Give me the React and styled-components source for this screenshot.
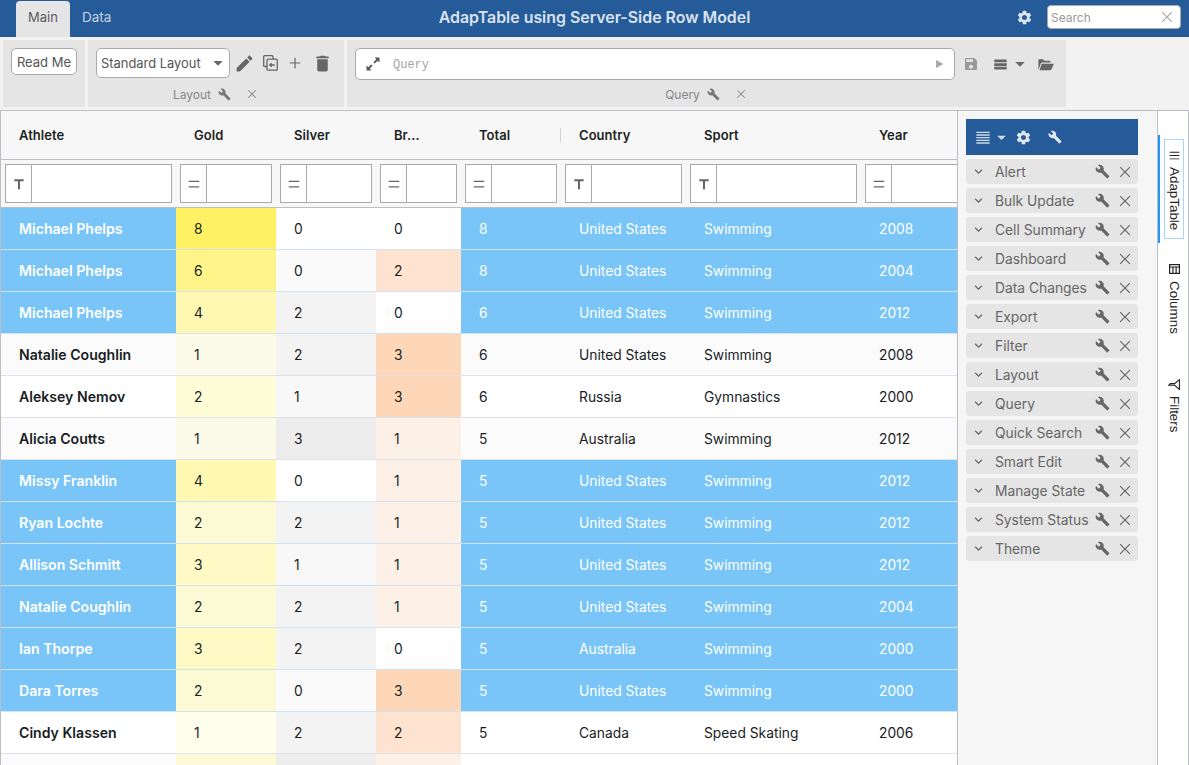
import React from 'react';
import styled, { createGlobalStyle } from 'styled-components';

const P = {
  edit: 'M3 17.25V21h3.75L17.81 9.94l-3.75-3.75L3 17.25zM20.71 7.04c.39-.39.39-1.02 0-1.41l-2.34-2.34c-.39-.39-1.02-.39-1.41 0l-1.83 1.83 3.75 3.75 1.83-1.83z',
  wrench: 'M22.7 19l-9.1-9.1c.9-2.3.4-5-1.5-6.9-2-2-5-2.4-7.4-1.3L9 6 6 9 1.6 4.7C.4 7.1.9 10.1 2.9 12.1c1.9 1.9 4.6 2.4 6.9 1.5l9.1 9.1c.4.4 1 .4 1.4 0l2.3-2.3c.5-.4.5-1.1.1-1.4z',
  gear: 'M19.14 12.94c.04-.3.06-.61.06-.94 0-.32-.02-.64-.07-.94l2.03-1.58a.49.49 0 0 0 .12-.61l-1.92-3.32a.488.488 0 0 0-.59-.22l-2.39.96c-.5-.38-1.03-.7-1.62-.94l-.36-2.54a.484.484 0 0 0-.48-.41h-3.84c-.24 0-.43.17-.47.41l-.36 2.54c-.59.24-1.13.57-1.62.94l-2.39-.96c-.22-.08-.47 0-.59.22L2.74 8.87c-.12.21-.08.47.12.61l2.03 1.58c-.05.3-.09.63-.09.94s.02.64.07.94l-2.03 1.58a.49.49 0 0 0-.12.61l1.92 3.32c.12.22.37.29.59.22l2.39-.96c.5.38 1.03.7 1.62.94l.36 2.54c.05.24.24.41.48.41h3.84c.24 0 .44-.17.47-.41l.36-2.54c.59-.24 1.13-.56 1.62-.94l2.39.96c.22.08.47 0 .59-.22l1.92-3.32c.12-.22.07-.47-.12-.61l-2.01-1.58zM12 15.6c-1.98 0-3.6-1.62-3.6-3.6s1.62-3.6 3.6-3.6 3.6 1.62 3.6 3.6-1.62 3.6-3.6 3.6z',
  trash: 'M6 19c0 1.1.9 2 2 2h8c1.1 0 2-.9 2-2V7H6v12zM19 4h-3.5l-1-1h-5l-1 1H5v2h14V4z',
  save: 'M17 3H5c-1.11 0-2 .9-2 2v14c0 1.1.89 2 2 2h14c1.1 0 2-.9 2-2V7l-4-4zm-5 16c-1.66 0-3-1.34-3-3s1.34-3 3-3 3 1.34 3 3-1.34 3-3 3zm3-10H5V5h10v4z',
  folder: 'M2 19V6c0-.8.6-1.4 1.4-1.4h5l2 2h7.2c.8 0 1.4.6 1.4 1.4v1H7.2c-.8 0-1.5.4-1.8 1.1L2.4 19zm1.6 1h15.2c.5 0 1-.3 1.2-.7L23.6 12c.3-.6-.1-1.2-.8-1.2H7.6c-.5 0-1 .3-1.2.7z',
  list: 'M2 5c0-.6.4-1 1-1h18c.6 0 1 .4 1 1v3.5H2zM2 9.8h20v4.4H2zM2 15.5h20V19c0 .6-.4 1-1 1H3c-.6 0-1-.4-1-1z',
  plus: 'M19 12.8h-6.2V19h-1.6v-6.2H5v-1.6h6.2V5h1.6v6.2H19z',
  close: 'M19 6.1 17.9 5 12 10.9 6.1 5 5 6.1 10.9 12 5 17.9 6.1 19 12 13.1 17.9 19 19 17.9 13.1 12z',
  chevron: 'M7.41 8.59 12 13.17l4.59-4.58L18 10l-6 6-6-6z',
  play: 'M6 4l15 8-15 8z',
  caret: 'M5 9h14l-7 7z',
  T: 'M4 4h16v3.4h-6.2V21h-3.6V7.4H4z',
  eq: 'M3 6.5h18v2H3zM3 16h18v2H3z',
  lines: 'M2 4h20v2H2zM2 8h20v2H2zM2 12h20v2H2zM2 16h20v2H2zM2 20h20v2H2z',
  menu: 'M3 5h18v1.7H3zM3 11.2h18v1.7H3zM3 17.4h18v1.7H3z',
};

const Global = createGlobalStyle`
  html, body { margin: 0; padding: 0; height: 100%; overflow: hidden; background: #fff; }
  body { font-family: Inter, "Noto Sans", sans-serif; color: #181d1f; }
  * { box-sizing: border-box; }
`;

const Svg = styled.svg`
  display: block;
  flex: none;
  width: ${p => p.$s}px;
  height: ${p => p.$s}px;
  fill: ${p => p.$c};
`;
const Icon = ({ d, s = 16, c = '#666' }) => (
  <Svg viewBox="0 0 24 24" $s={s} $c={c}><path d={d} /></Svg>
);
const Drawn = styled.svg`
  display: block;
  flex: none;
`;
const CopyIcon = () => (
  <Drawn width="15" height="16" viewBox="0 0 15 16" fill="none" stroke="#666" strokeWidth="1.3">
    <path d="M4 11.5H1.7a1 1 0 0 1-1-1V1.7a1 1 0 0 1 1-1H9a1 1 0 0 1 1 1V4" />
    <rect x="4" y="4.2" width="10.3" height="11" rx="1" />
    <path d="M11.8 10H6.8M8.6 8.2 6.8 10l1.8 1.8" />
  </Drawn>
);
const ExpandIcon = () => (
  <Drawn width="14" height="14" viewBox="0 0 14 14" fill="#555" stroke="none">
    <path d="M8.5 .5H13.5V5.5L11.7 3.7 8.8 6.6 7.4 5.2 10.3 2.3zM5.5 13.5H.5V8.5L2.3 10.3 5.2 7.4 6.6 8.8 3.7 11.7z" />
  </Drawn>
);
const FilterIcon = () => (
  <Drawn width="12" height="11" viewBox="0 0 12 11" fill="none" stroke="#222" strokeWidth="1.1">
    <path d="M11.4 .6V10.4L6.6 6.3H.8L2.4 4.6H6.6z" />
  </Drawn>
);
const ColumnsIcon = () => (
  <Drawn width="11" height="10" viewBox="0 0 11 10" fill="none" stroke="#222" strokeWidth="1.2">
    <rect x=".6" y=".6" width="9.8" height="8.8" /><path d="M.6 3h9.8M3.9 3V9.4M7.1 3V9.4" />
  </Drawn>
);

const Page = styled.div`
  width: 1189px;
  height: 765px;
  display: flex;
  flex-direction: column;
  overflow: hidden;
`;
const TopBar = styled.header`
  height: 37px;
  flex: none;
  background: #265b9a;
  display: grid;
  grid-template-columns: 1fr auto 1fr;
  align-items: stretch;
`;
const Tabs = styled.div`
  display: flex;
  padding: 1px 0 0 16px;
`;
const Tab = styled.div`
  width: 54px;
  padding-left: 12px;
  font-size: ${p => (p.$active ? 13 : 13.5)}px;
  line-height: 33px;
  border-radius: 4px 4px 0 0;
  color: ${p => (p.$active ? '#5c5c5c' : '#c5d2e3')};
  background: ${p => (p.$active ? '#e5e5e5' : 'transparent')};
`;
const Title = styled.div`
  font-size: 15.9px;
  font-weight: 600;
  line-height: 35px;
  color: #dbe3ee;
`;
const TopRight = styled.div`
  display: flex;
  align-items: center;
  justify-content: flex-end;
  gap: 14px;
  padding: 0 8px 3px 0;
`;
const Search = styled.div`
  width: 134px;
  height: 24px;
  background: #fff;
  border: 1px solid #aaa;
  border-radius: 4px;
  padding: 0 4px 0 3px;
  display: flex;
  align-items: center;
  justify-content: space-between;
  font-size: 12px;
  color: #9a9a9a;
`;
const Toolbar = styled.section`
  height: 73px;
  flex: none;
  background: #f2f2f2;
  display: flex;
  gap: 3px;
  padding: 3px 3px;
`;
const Panel = styled.div`
  width: ${p => p.$w}px;
  height: 67px;
  background: #e5e5e5;
  display: flex;
  flex-direction: column;
`;
const PanelBody = styled.div`
  height: 45px;
  padding: 8px 8px 0;
  display: flex;
  align-items: flex-start;
`;
const PanelFoot = styled.div`
  display: flex;
  align-items: center;
  justify-content: center;
  gap: 7px;
  height: 18px;
  font-size: 12px;
  color: #888;
`;
const FootClose = styled.span`
  margin-left: 7px;
  display: block;
`;
const ReadMe = styled.div`
  width: 66px;
  height: 27px;
  background: #fff;
  border: 1px solid #aaa;
  border-radius: 5px;
  font-size: 13px;
  line-height: 26px;
  text-align: center;
  color: #555;
`;
const Select = styled.div`
  width: 134px;
  height: 30px;
  flex: none;
  background: #fff;
  border: 1px solid #aaa;
  border-radius: 5px;
  display: flex;
  align-items: center;
  justify-content: space-between;
  padding: 0 3px 0 4px;
  font-size: 12.9px;
  color: #555;
`;
const QueryBox = styled.div`
  width: 600px;
  height: 32px;
  flex: none;
  background: #fff;
  border: 1px solid #aaa;
  border-radius: 5px;
  display: flex;
  align-items: center;
  padding: 0 9px 0 10px;
  font-family: "Liberation Mono", monospace;
  font-size: 12px;
  color: #a4a4a4;
`;
const QueryText = styled.span`
  flex: 1;
  margin-left: 13px;
  padding-top: 1px;
`;
const IconRow = styled.div`
  display: flex;
  align-items: center;
  gap: ${p => p.$gap}px;
  height: ${p => p.$h}px;
  margin-left: ${p => p.$ml}px;
`;
const Main = styled.main`
  flex: 1;
  min-height: 0;
  display: flex;
  border-top: 1px solid #babfc7;
`;
const Grid = styled.div`
  width: 958px;
  flex: none;
  overflow: hidden;
  border-left: 1px solid #babfc7;
  border-right: 1px solid #babfc7;
`;
const HeaderRow = styled.div`
  display: flex;
  width: max-content;
  height: 48px;
  background: #f7f7f8;
`;
const HeaderCell = styled.div`
  width: ${p => p.$w}px;
  flex: none;
  padding-left: 18px;
  font-size: 13px;
  letter-spacing: 0.05px;
  font-weight: 600;
  line-height: 49px;
  color: #1c1f21;
  position: relative;
  ${p => p.$sep && `
    &::after { content: ''; position: absolute; right: 0; top: 17px; height: 14px; width: 1px; background: #d0d3d8; }
  `}
`;
const FilterRow = styled.div`
  display: flex;
  width: max-content;
  height: 49px;
  background: #f7f7f8;
  border-top: 1px solid #babfc7;
  border-bottom: 1px solid #babfc7;
`;
const FilterCell = styled.div`
  width: ${p => p.$w}px;
  flex: none;
  padding: 4px 4px;
`;
const FilterBox = styled.div`
  height: 39px;
  background: #fff;
  border: 1px solid #aaa;
  display: flex;
`;
const FilterKind = styled.div`
  width: 26px;
  flex: none;
  border-right: 1px solid #aaa;
  display: flex;
  align-items: center;
  justify-content: center;
`;
const Row = styled.div`
  display: flex;
  width: max-content;
  height: 42px;
  overflow: hidden;
  background: ${p => (p.$blue ? '#7ac5f8' : p.$odd ? '#fbfbfb' : '#fff')};
  color: ${p => (p.$blue ? '#fff' : '#181d1f')};
  border-bottom: 1px solid ${p => (p.$blue ? '#d4e3f1' : '#dde2eb')};
`;
const Cell = styled.div`
  width: ${p => p.$w}px;
  flex: none;
  padding-left: 18px;
  font-size: ${p => (p.$bold ? 14.1 : 13.8)}px;
  line-height: 42px;
  font-weight: ${p => (p.$bold ? 600 : 400)};
  background: ${p => p.$bg || 'transparent'};
  color: ${p => p.$color || 'inherit'};
`;
const Side = styled.aside`
  width: 200px;
  flex: none;
  background: #f6f6f6;
  padding: 8px 0 0 8px;
  border-right: 1px solid #babfc7;
`;
const SideHead = styled.div`
  width: 172px;
  height: 36px;
  background: #265b9a;
  display: flex;
  align-items: center;
  padding: 0 0 0 9px;
`;
const SideList = styled.div`
  width: 172px;
  margin-top: 4px;
  display: flex;
  flex-direction: column;
  gap: 4px;
`;
const SideItem = styled.div`
  height: 25px;
  background: #e5e5e5;
  border-radius: 3px;
  display: flex;
  align-items: center;
  padding: 0 4px 0 5px;
  font-size: 13.8px;
  color: #666;
`;
const SideName = styled.span`
  flex: 1;
  margin-left: 9px;
  white-space: nowrap;
`;
const Rail = styled.nav`
  flex: 1;
  background: #fff;
  border-right: 1px solid #babfc7;
  padding-top: 24px;
  font-family: "Liberation Sans", Arial, sans-serif;
`;
const RailTab = styled.div`
  width: 30px;
  height: ${p => p.$h}px;
  padding: 4px;
  border-left: 2px solid ${p => (p.$active ? '#2196f3' : 'transparent')};
`;
const RailInner = styled.div`
  height: ${p => (p.$active ? '100%' : 'auto')};
  border: 1px solid ${p => (p.$active ? '#a9d3f8' : 'transparent')};
  display: flex;
  flex-direction: column;
  align-items: center;
  padding-top: ${p => p.$top}px;
  gap: ${p => p.$gap}px;
  font-size: 13.4px;
  color: #222;
`;
const RailText = styled.span`
  writing-mode: vertical-lr;
  white-space: nowrap;
`;

const cols = [175, 100, 100, 85, 100, 125, 175, 200];
const heads = ['Athlete', 'Gold', 'Silver', 'Br...', 'Total', 'Country', 'Sport', 'Year'];
const kinds = [P.T, P.eq, P.eq, P.eq, P.eq, P.T, P.T, P.eq];

const rows = [
  ['Michael Phelps', 8, 0, 0, 8, 'United States', 'Swimming', 2008],
  ['Michael Phelps', 6, 0, 2, 8, 'United States', 'Swimming', 2004],
  ['Michael Phelps', 4, 2, 0, 6, 'United States', 'Swimming', 2012],
  ['Natalie Coughlin', 1, 2, 3, 6, 'United States', 'Swimming', 2008],
  ['Aleksey Nemov', 2, 1, 3, 6, 'Russia', 'Gymnastics', 2000],
  ['Alicia Coutts', 1, 3, 1, 5, 'Australia', 'Swimming', 2012],
  ['Missy Franklin', 4, 0, 1, 5, 'United States', 'Swimming', 2012],
  ['Ryan Lochte', 2, 2, 1, 5, 'United States', 'Swimming', 2012],
  ['Allison Schmitt', 3, 1, 1, 5, 'United States', 'Swimming', 2012],
  ['Natalie Coughlin', 2, 2, 1, 5, 'United States', 'Swimming', 2004],
  ['Ian Thorpe', 3, 2, 0, 5, 'Australia', 'Swimming', 2000],
  ['Dara Torres', 2, 0, 3, 5, 'United States', 'Swimming', 2000],
  ['Cindy Klassen', 1, 2, 2, 5, 'Canada', 'Speed Skating', 2006],
];
// The next row only shows its top edge at the bottom of the window: backgrounds, no legible text.
const partialRow = [2, 3, 1];

const goldBg = (v, odd) => {
  const base = odd ? 251 : 255;
  const a = v / 8;
  const mix = (to, from) => Math.round(from + (to - from) * a);
  return `rgb(${mix(255, base)},${mix(241, base)},${mix(100, base)})`;
};
const silverBg = (v, odd) => ['', '#f8f8f8', '#f3f3f3', '#ededed'][v] || (odd ? '#fafafa' : '#fff');
const bronzeBg = (v, odd) => ['', '#fdf0e6', '#fde3d0', '#fdd7b8'][v] || (odd ? '#fafafa' : '#fff');

const sideItems = ['Alert', 'Bulk Update', 'Cell Summary', 'Dashboard', 'Data Changes', 'Export', 'Filter', 'Layout', 'Query', 'Quick Search', 'Smart Edit', 'Manage State', 'System Status', 'Theme'];

export default function App() {
  return (
    <Page>
      <Global />
      <TopBar>
        <Tabs>
          <Tab $active>Main</Tab>
          <Tab>Data</Tab>
        </Tabs>
        <Title>AdapTable using Server-Side Row Model</Title>
        <TopRight>
          <Icon d={P.gear} s={17} c="#dde5ef" />
          <Search>Search<Icon d={P.close} s={18} c="#aaa" /></Search>
        </TopRight>
      </TopBar>
      <Toolbar>
        <Panel $w={82}>
          <PanelBody><ReadMe>Read Me</ReadMe></PanelBody>
        </Panel>
        <Panel $w={256}>
          <PanelBody>
            <Select>Standard Layout<Icon d={P.caret} s={16} /></Select>
            <IconRow $gap={8} $h={30} $ml={4}>
              <Icon d={P.edit} s={21} />
              <CopyIcon />
              <Icon d={P.plus} s={18} />
              <Icon d={P.trash} s={21} />
            </IconRow>
          </PanelBody>
          <PanelFoot>Layout<Icon d={P.wrench} s={13} c="#777" /><FootClose><Icon d={P.close} s={14} c="#888" /></FootClose></PanelFoot>
        </Panel>
        <Panel $w={719}>
          <PanelBody>
            <QueryBox>
              <ExpandIcon />
              <QueryText>Query</QueryText>
              <Icon d={P.play} s={12} c="#aaa" />
            </QueryBox>
            <IconRow $gap={9} $h={32} $ml={8}>
              <Icon d={P.save} s={16} c="#999" />
              <IconRow $gap={4} $h={32} $ml={5}>
                <Icon d={P.list} s={15} />
                <Icon d={P.caret} s={16} />
              </IconRow>
              <Icon d={P.folder} s={17} />
            </IconRow>
          </PanelBody>
          <PanelFoot>Query<Icon d={P.wrench} s={13} c="#777" /><FootClose><Icon d={P.close} s={14} c="#888" /></FootClose></PanelFoot>
        </Panel>
      </Toolbar>
      <Main>
        <Grid>
          <HeaderRow>
            {heads.map((h, i) => <HeaderCell key={h} $w={cols[i]} $sep={h === 'Total'}>{h}</HeaderCell>)}
          </HeaderRow>
          <FilterRow>
            {kinds.map((k, i) => (
              <FilterCell key={heads[i]} $w={cols[i]}>
                <FilterBox>
                  <FilterKind><Icon d={k} s={14} c="#666" /></FilterKind>
                </FilterBox>
              </FilterCell>
            ))}
          </FilterRow>
          {rows.map((r, idx) => {
            const odd = idx % 2 === 1;
            const blue = idx < 3 || (idx >= 6 && idx <= 11);
            return (
              <Row key={idx} $blue={blue} $odd={odd}>
                <Cell $w={cols[0]} $bold>{r[0]}</Cell>
                <Cell $w={cols[1]} $bg={goldBg(r[1], odd)} $color="#181d1f">{r[1]}</Cell>
                <Cell $w={cols[2]} $bg={silverBg(r[2], odd)} $color="#181d1f">{r[2]}</Cell>
                <Cell $w={cols[3]} $bg={bronzeBg(r[3], odd)} $color="#181d1f">{r[3]}</Cell>
                <Cell $w={cols[4]}>{r[4]}</Cell>
                <Cell $w={cols[5]}>{r[5]}</Cell>
                <Cell $w={cols[6]}>{r[6]}</Cell>
                <Cell $w={cols[7]}>{r[7]}</Cell>
              </Row>
            );
          })}
          <Row $odd>
            <Cell $w={cols[0]} />
            <Cell $w={cols[1]} $bg={goldBg(partialRow[0], true)} />
            <Cell $w={cols[2]} $bg={silverBg(partialRow[1], true)} />
            <Cell $w={cols[3]} $bg={bronzeBg(partialRow[2], true)} />
          </Row>
        </Grid>
        <Side>
          <SideHead>
            <Icon d={P.lines} s={16} c="#cfdbe9" />
            <IconRow $gap={0} $h={36} $ml={3}><Icon d={P.caret} s={15} c="#cfdbe9" /></IconRow>
            <IconRow $gap={16} $h={36} $ml={6}>
              <Icon d={P.gear} s={17} c="#e3e9f1" />
              <Icon d={P.wrench} s={14} c="#e3e9f1" />
            </IconRow>
          </SideHead>
          <SideList>
            {sideItems.map(n => (
              <SideItem key={n}>
                <Icon d={P.chevron} s={15} c="#666" />
                <SideName>{n}</SideName>
                <IconRow $gap={6} $h={25} $ml={0}>
                  <Icon d={P.wrench} s={15} c="#666" />
                  <Icon d={P.close} s={18} c="#666" />
                </IconRow>
              </SideItem>
            ))}
          </SideList>
        </Side>
        <Rail>
          <RailTab $active $h={108}>
            <RailInner $active $top={9} $gap={5}>
              <Icon d={P.menu} s={13} c="#222" />
              <RailText>AdapTable</RailText>
            </RailInner>
          </RailTab>
          <RailTab $h={115}>
            <RailInner $top={16} $gap={7}>
              <ColumnsIcon />
              <RailText>Columns</RailText>
            </RailInner>
          </RailTab>
          <RailTab $h={90}>
            <RailInner $top={16} $gap={6}>
              <FilterIcon />
              <RailText>Filters</RailText>
            </RailInner>
          </RailTab>
        </Rail>
      </Main>
    </Page>
  );
}
